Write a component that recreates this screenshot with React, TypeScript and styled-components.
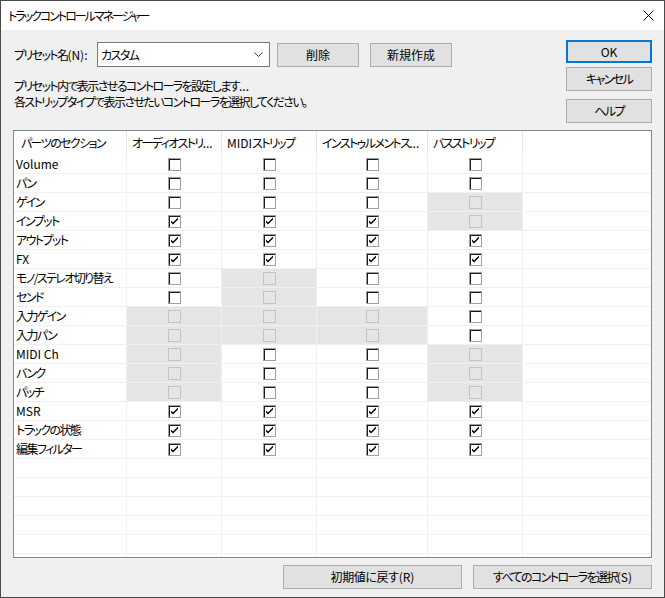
import React from "react";
import styled, { createGlobalStyle, css } from "styled-components";

const GlobalStyle = createGlobalStyle`
  html, body {
    margin: 0;
    padding: 0;
    overflow: hidden;
    background: #f0f0f0;
  }
  * { box-sizing: border-box; }
  body {
    font-family: "Noto Sans CJK JP", "Noto Sans", sans-serif;
    font-size: 12px;
    font-feature-settings: "palt" 1;
    letter-spacing: -1.6px;
    color: #000;
  }
`;

type State = "u" | "c" | "d";

const ROWS: [string, State[], boolean?][] = [
  ["Volume", ["u", "u", "u", "u"], true],
  ["パン", ["u", "u", "u", "u"]],
  ["ゲイン", ["u", "u", "u", "d"]],
  ["インプット", ["c", "c", "c", "d"]],
  ["アウトプット", ["c", "c", "c", "c"]],
  ["FX", ["c", "c", "c", "c"], true],
  ["モノ/ステレオ切り替え", ["u", "d", "u", "u"]],
  ["センド", ["u", "d", "u", "u"]],
  ["入力ゲイン", ["d", "d", "d", "u"]],
  ["入力パン", ["d", "d", "d", "u"]],
  ["MIDI Ch", ["d", "u", "u", "d"], true],
  ["バンク", ["d", "u", "u", "d"]],
  ["パッチ", ["d", "u", "u", "d"]],
  ["MSR", ["c", "c", "c", "c"], true],
  ["トラックの状態", ["c", "c", "c", "c"]],
  ["編集フィルター", ["c", "c", "c", "c"]],
];

const EMPTY_ROWS = 6;

const Latin = styled.span`
  letter-spacing: 0;
`;

const Window = styled.div`
  width: 665px;
  height: 598px;
  border: 1px solid #4a4a4a;
  background: #f0f0f0;
  display: flex;
  flex-direction: column;
`;

const TitleBar = styled.div`
  height: 29px;
  background: #fff;
  display: flex;
  align-items: center;
  justify-content: space-between;
  padding: 0 10px 0 7px;
  flex-shrink: 0;
`;

const Title = styled.span`
  font-size: 12px;
  line-height: 16px;
  letter-spacing: -2px;
`;

const Body = styled.div`
  flex: 1;
  display: flex;
  flex-direction: column;
  padding: 10px 12px 8px 12px;
`;

const TopSection = styled.div`
  height: 90px;
  display: flex;
  justify-content: space-between;
  flex-shrink: 0;
`;

const LeftColumn = styled.div`
  display: flex;
  flex-direction: column;
`;

const PresetRow = styled.div`
  margin-top: 2px;
  display: flex;
  align-items: center;
  height: 25px;
`;

const PresetLabel = styled.span`
  width: 84px;
  padding-left: 1px;
  line-height: 16px;
  white-space: nowrap;
`;

const Combo = styled.div`
  width: 173px;
  height: 25px;
  background: #fff;
  border: 1px solid #7a7a7a;
  display: flex;
  align-items: center;
  justify-content: space-between;
  padding: 0 6px 0 3px;
  margin-right: 7px;
`;

const Button = styled.div<{
  $w: number;
  $h?: number;
  $default?: boolean;
  $mt?: number;
  $ml?: number;
  $ls?: number;
}>`
  width: ${(p) => p.$w}px;
  height: ${(p) => p.$h ?? 24}px;
  margin-top: ${(p) => p.$mt ?? 0}px;
  margin-left: ${(p) => p.$ml ?? 0}px;
  letter-spacing: ${(p) => p.$ls ?? -1.6}px;
  background: #e1e1e1;
  border: 1px solid #adadad;
  display: flex;
  align-items: center;
  justify-content: center;
  line-height: 16px;
  white-space: nowrap;
  flex-shrink: 0;
  ${(p) =>
    p.$default &&
    css`
      border: 2px solid #0078d7;
    `}
`;

const Description = styled.div`
  margin-top: 11px;
  padding-left: 1px;
  line-height: 16px;
  white-space: nowrap;
`;

const RightColumn = styled.div`
  display: flex;
  flex-direction: column;
  width: 86px;
`;

const Table = styled.div`
  height: 428px;
  border: 1px solid #828790;
  background: #fff;
  overflow: hidden;
  flex-shrink: 0;
`;

const Grid = styled.div`
  display: grid;
  grid-template-columns: 113px 95px 95px 111px 95px 1fr;
  grid-template-rows: 24px;
  grid-auto-rows: 19px;
`;

const HeaderCell = styled.div<{ $first?: boolean; $last?: boolean }>`
  display: flex;
  align-items: center;
  padding-left: ${(p) => (p.$first ? 7 : 5)}px;
  border-right: ${(p) => (p.$last ? "none" : "1px solid #e5e5e5")};
  white-space: nowrap;
  overflow: hidden;
  line-height: 16px;
`;

const LabelCell = styled.div<{ $latin?: boolean }>`
  display: flex;
  align-items: center;
  padding-left: 2px;
  border-right: 1px solid #f0f0f0;
  border-bottom: 1px solid #f0f0f0;
  white-space: nowrap;
  overflow: hidden;
  line-height: 16px;
  letter-spacing: ${(p) => (p.$latin ? "0" : "-1.6px")};
`;

const CheckCell = styled.div<{ $disabled?: boolean; $last?: boolean }>`
  display: flex;
  align-items: center;
  justify-content: center;
  background: ${(p) => (p.$disabled ? "#e5e5e5" : "#fff")};
  border-right: ${(p) => (p.$last ? "none" : "1px solid #f0f0f0")};
  border-bottom: 1px solid #f0f0f0;
`;

const Box = styled.span<{ $disabled?: boolean }>`
  width: 13px;
  height: 13px;
  display: flex;
  align-items: center;
  justify-content: center;
  ${(p) =>
    p.$disabled
      ? css`
          border: 1px solid #c4c4c4;
        `
      : css`
          border: 1px solid #a0a0a0;
          box-shadow: inset 1px 1px 0 0 #1a1a1a;
          background: #fff;
        `}
`;

const Footer = styled.div`
  margin-top: 7px;
  display: flex;
  justify-content: flex-end;
  gap: 11px;
`;

const CloseIcon = () => (
  <svg width="11" height="11" viewBox="0 0 11 11">
    <path d="M0.5 0.5 L10.5 10.5 M10.5 0.5 L0.5 10.5" stroke="#000" strokeWidth="1" fill="none" />
  </svg>
);

const Chevron = () => (
  <svg width="9" height="5" viewBox="0 0 9 5">
    <path d="M0.5 0.5 L4.5 4.5 L8.5 0.5" stroke="#333" strokeWidth="1" fill="none" />
  </svg>
);

const CheckMark = () => (
  <svg width="9" height="9" viewBox="0 0 9 9" style={{ marginLeft: 1, marginTop: 1 }}>
    <path d="M1 3.5 L1 5.5 L3 7.5 L8 2.5 L8 0.5 L3 5.5 Z" fill="#000" />
  </svg>
);

const Checkbox = ({ state }: { state: State }) => (
  <Box $disabled={state === "d"}>{state === "c" && <CheckMark />}</Box>
);

export default function App() {
  return (
    <>
      <GlobalStyle />
      <Window>
        <TitleBar>
          <Title>トラックコントロールマネージャー</Title>
          <CloseIcon />
        </TitleBar>
        <Body>
          <TopSection>
            <LeftColumn>
              <PresetRow>
                <PresetLabel>
                  プリセット名<Latin>(N):</Latin>
                </PresetLabel>
                <Combo>
                  <span>カスタム</span>
                  <Chevron />
                </Combo>
                <Button $w={82} $ls={0}>
                  削除
                </Button>
                <Button $w={82} $ml={11} $ls={0}>
                  新規作成
                </Button>
              </PresetRow>
              <Description>
                プリセット内で表示させるコントローラを設定します<Latin>...</Latin>
                <br />
                各ストリップタイプで表示させたいコントローラを選択してください。
              </Description>
            </LeftColumn>
            <RightColumn>
              <Button $w={86} $h={23} $default>
                <Latin>OK</Latin>
              </Button>
              <Button $w={86} $h={24} $mt={4}>
                キャンセル
              </Button>
              <Button $w={86} $h={24} $mt={8}>
                ヘルプ
              </Button>
            </RightColumn>
          </TopSection>
          <Table>
            <Grid>
              <HeaderCell $first>パーツのセクション</HeaderCell>
              <HeaderCell>
                オーディオストリ<Latin>...</Latin>
              </HeaderCell>
              <HeaderCell>
                <Latin>MIDI</Latin>ストリップ
              </HeaderCell>
              <HeaderCell>
                インストゥルメントス<Latin>...</Latin>
              </HeaderCell>
              <HeaderCell>バスストリップ</HeaderCell>
              <HeaderCell $last />
              {ROWS.map(([label, states, latin]) => (
                <React.Fragment key={label}>
                  <LabelCell $latin={latin}>{label}</LabelCell>
                  {states.map((s, j) => (
                    <CheckCell key={j} $disabled={s === "d"}>
                      <Checkbox state={s} />
                    </CheckCell>
                  ))}
                  <CheckCell $last />
                </React.Fragment>
              ))}
              {Array.from({ length: EMPTY_ROWS }).map((_, r) => (
                <React.Fragment key={`e${r}`}>
                  <LabelCell />
                  <CheckCell />
                  <CheckCell />
                  <CheckCell />
                  <CheckCell />
                  <CheckCell $last />
                </React.Fragment>
              ))}
            </Grid>
          </Table>
          <Footer>
            <Button $w={179} $ls={-0.4}>
              初期値に戻す<Latin>(R)</Latin>
            </Button>
            <Button $w={179}>
              すべてのコントローラを選択<Latin>(S)</Latin>
            </Button>
          </Footer>
        </Body>
      </Window>
    </>
  );
}
